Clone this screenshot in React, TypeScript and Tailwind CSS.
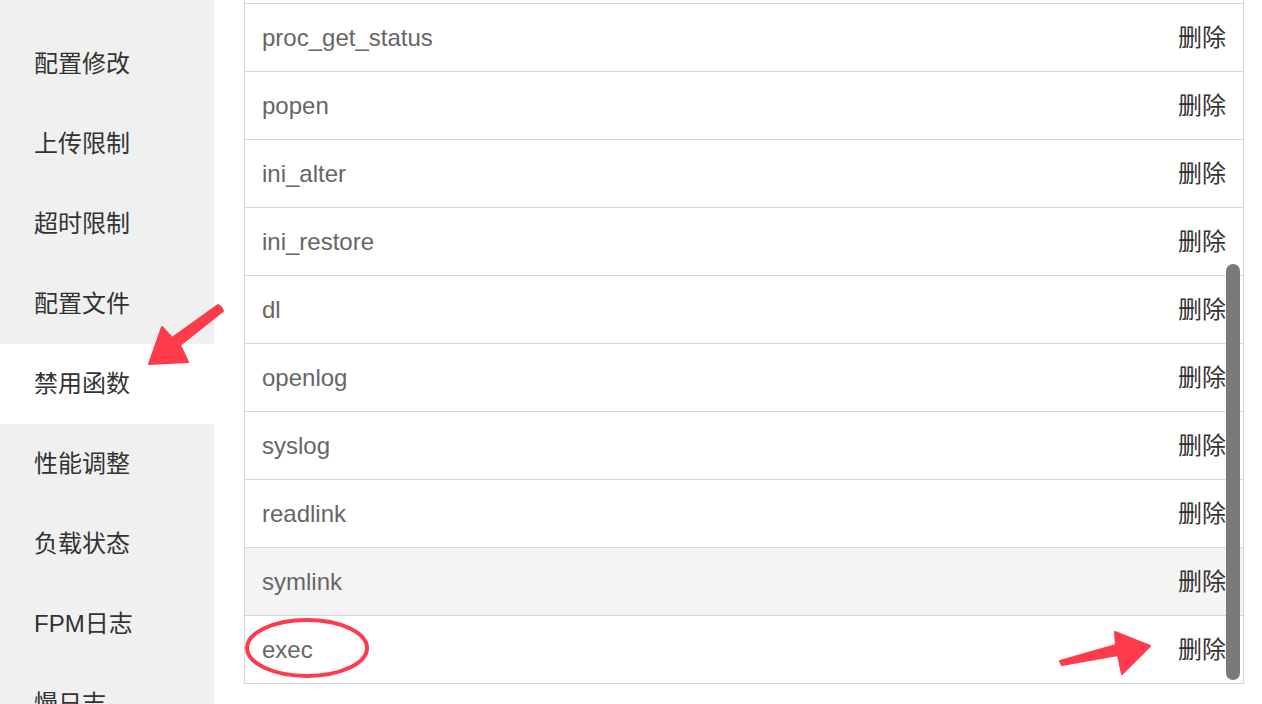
import React from 'react';

const menu = ['PHP版本', '配置修改', '上传限制', '超时限制', '配置文件', '禁用函数', '性能调整', '负载状态', 'FPM日志', '慢日志'];

const funcs = ['system', 'proc_get_status', 'popen', 'ini_alter', 'ini_restore', 'dl', 'openlog', 'syslog', 'readlink', 'symlink', 'exec'];

const font = { fontFamily: '"Liberation Sans", "Noto Sans CJK SC", sans-serif' };

const Annotations: React.FC = () => (
  <svg className="absolute inset-0 pointer-events-none" width="1262" height="704" viewBox="0 0 1262 704">
    <g fill="#ff3a4a" stroke="#ff3a4a" strokeLinejoin="round" strokeWidth="2">
      {/* arrow pointing at the active menu item */}
      <path d="M221 307 L223 311 L180 345 L188 362 L149 364 L162 327 L172 338 L218 305 Z" />
      {/* arrow pointing at the delete button */}
      <path d="M1060 661 L1062 665 L1118 655 L1122 674 L1150 646 L1115 632 L1116 645 Z" />
    </g>
    <ellipse cx="307" cy="648" rx="60" ry="28" fill="none" stroke="#ff3a4a" strokeWidth="4" />
  </svg>
);

const App: React.FC = () => {
  return (
    <div className="relative flex h-[704px] w-[1262px] overflow-hidden bg-white" style={font}>
      <aside className="w-[214px] shrink-0 bg-[#f0f0f0]">
        <div className="-mt-[56px] flex flex-col">
          {menu.map((m) => (
            <div
              key={m}
              className={`flex h-[80px] items-center pl-[34px] text-[24px] text-[#333] ${m === '禁用函数' ? 'bg-white' : ''}`}
            >
              {m}
            </div>
          ))}
        </div>
      </aside>

      <main className="flex-1 pl-[30px] pr-[18px]">
        <div className="-mt-[65px] border-x border-b border-[#d6d6d6]">
          {funcs.map((f) => (
            <div
              key={f}
              className={`flex h-[68px] items-center justify-between border-t border-[#d6d6d6] pl-[17px] pr-[17px] ${f === 'symlink' ? 'bg-[#f4f4f4]' : ''}`}
            >
              <span className="text-[24px] text-[#666]">{f}</span>
              <span className="text-[24px] text-[#333]">删除</span>
            </div>
          ))}
        </div>
      </main>

      {/* overlay scrollbar */}
      <div className="absolute left-[1226px] top-[264px] h-[416px] w-[14px] rounded-full bg-[#7a7a7a]" />

      <Annotations />
    </div>
  );
};

export default App;
